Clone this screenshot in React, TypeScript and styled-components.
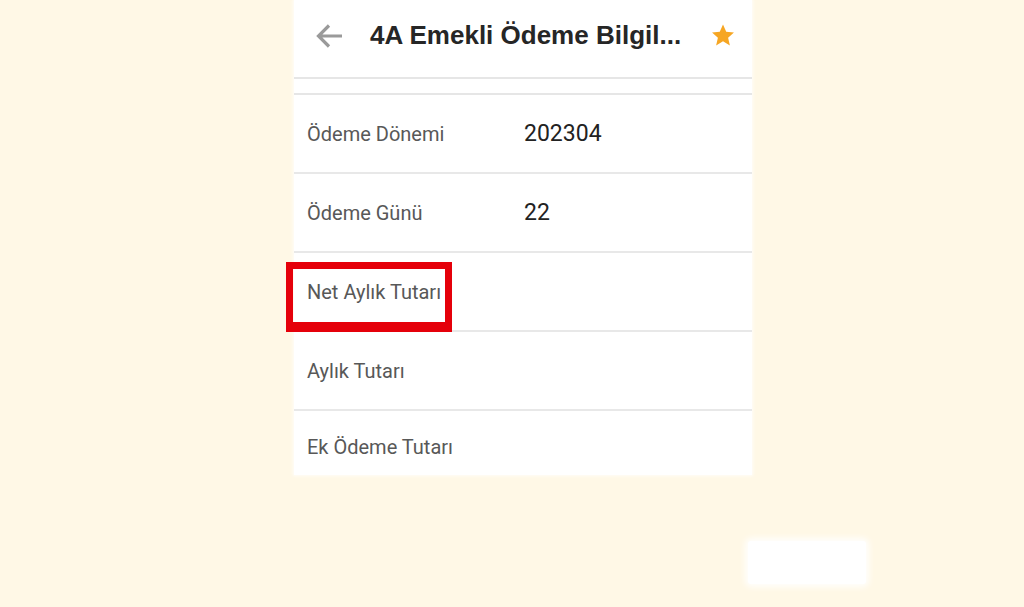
import React from "react";
import styled, { createGlobalStyle } from "styled-components";

const Global = createGlobalStyle`
  html, body { margin: 0; padding: 0; }
  body {
    background: #fff8e6;
    font-family: Roboto, "Liberation Sans", Arial, sans-serif;
    width: 1024px;
    height: 607px;
    overflow: hidden;
  }
`;

const Page = styled.div`
  position: relative;
  width: 1024px;
  height: 607px;
  display: flex;
  align-items: flex-start;
  padding-left: 294px;
  box-sizing: border-box;
`;

const Panel = styled.div`
  width: 458px;
  height: 475px;
  background: #ffffff;
  display: flex;
  flex-direction: column;
  box-shadow: 0 0 3px 1px rgba(255, 255, 255, 0.8);
`;

const Header = styled.div`
  height: 79px;
  flex: 0 0 79px;
  display: flex;
  align-items: center;
  padding: 0 14px 6px 20px;
  box-sizing: border-box;
  border-bottom: 2px solid #e6e6e6;
`;

const IconBox = styled.div`
  width: 30px;
  height: 30px;
  display: flex;
  align-items: center;
  justify-content: center;
`;

const Title = styled.div`
  flex: 1;
  margin-left: 26px;
  font-family: "Liberation Sans", Arial, sans-serif;
  font-size: 26px;
  font-weight: 700;
  color: #262626;
  white-space: nowrap;
`;

const Spacer = styled.div`
  height: 14px;
  flex: 0 0 14px;
  border-bottom: 2px solid #e6e6e6;
`;

const Row = styled.div<{ $last?: boolean }>`
  position: relative;
  height: ${(p) => (p.$last ? "64px" : "77px")};
  flex: 0 0 ${(p) => (p.$last ? "64px" : "77px")};
  display: flex;
  align-items: ${(p) => (p.$last ? "flex-start" : "center")};
  padding-top: ${(p) => (p.$last ? "24px" : "0")};
  padding-left: 13px;
  border-bottom: ${(p) => (p.$last ? "none" : "2px solid #e8e8e8")};
  box-sizing: content-box;
`;

const LabelCell = styled.div`
  width: 217px;
  flex: 0 0 217px;
  font-size: 20px;
  color: #585858;
  white-space: nowrap;
`;

const Mark = styled.div`
  position: absolute;
  left: -8px;
  top: 9px;
  width: 152px;
  height: 53px;
  border: 7px solid #e5000a;
  border-bottom-width: 10px;
  pointer-events: none;
`;

const Value = styled.div`
  font-size: 23px;
  color: #222222;
`;

const Ghost = styled.div`
  position: absolute;
  left: 748px;
  top: 541px;
  width: 118px;
  height: 43px;
  background: #ffffff;
  border-radius: 3px;
  box-shadow: 0 0 6px 3px rgba(255, 255, 255, 0.9);
`;

const rows = [
  { label: "Ödeme Dönemi", value: "202304" },
  { label: "Ödeme Günü", value: "22" },
  { label: "Net Aylık Tutarı", value: "", marked: true },
  { label: "Aylık Tutarı", value: "" },
  { label: "Ek Ödeme Tutarı", value: "", last: true },
];

export default function App() {
  return (
    <>
      <Global />
      <Page>
        <Panel>
          <Header>
            <IconBox>
              <svg width="28" height="26" viewBox="0 0 28 26">
                <path
                  d="M27 13H4M14 2.5L3.5 13 14 23.5"
                  fill="none"
                  stroke="#9a9a9a"
                  strokeWidth="3.2"
                />
              </svg>
            </IconBox>
            <Title>4A Emekli Ödeme Bilgil...</Title>
            <IconBox>
              <svg width="26" height="25" viewBox="0 0 24 24">
                <path
                  d="M12 1.5l3.1 6.9 7.4.7-5.6 5 1.7 7.4L12 17.6l-6.6 3.9 1.7-7.4-5.6-5 7.4-.7z"
                  fill="#f6a623"
                />
              </svg>
            </IconBox>
          </Header>
          <Spacer />
          {rows.map((r) => (
            <Row key={r.label} $last={r.last}>
              {r.marked && <Mark />}
              <LabelCell>{r.label}</LabelCell>
              <Value>{r.value}</Value>
            </Row>
          ))}
        </Panel>
        <Ghost />
      </Page>
    </>
  );
}
